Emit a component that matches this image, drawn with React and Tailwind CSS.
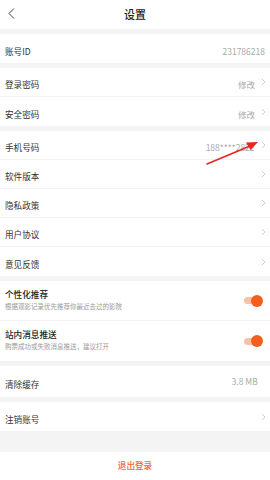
import React from "react";

const Chevron = () => (
  <svg width="5" height="8" viewBox="0 0 5 8" className="shrink-0">
    <path d="M1 1 L4 4 L1 7" fill="none" stroke="#c8c8c8" strokeWidth="0.9" />
  </svg>
);

const Label = ({ children, bold }) => (
  <span className={`inline-block text-[10px] leading-[12px] scale-[0.86] origin-left whitespace-nowrap ${bold ? "text-[#222] font-medium" : "text-[#333]"}`}>
    {children}
  </span>
);

const Value = ({ children }) => (
  <span className="inline-block text-[10px] leading-[12px] scale-[0.85] origin-right whitespace-nowrap text-[#aaa]">
    {children}
  </span>
);

const Row = ({ label, value, chevron = true, divider = true, pr = "pr-[4px]" }) => (
  <div className={`h-[29px] flex items-center pl-[5px] ${pr} bg-white ${divider ? "border-b border-[#f3f3f3]" : ""}`}>
    <div className="flex-1">
      <Label>{label}</Label>
    </div>
    {value && <div className={chevron ? "mr-[6px]" : ""}><Value>{value}</Value></div>}
    {chevron && <Chevron />}
  </div>
);

const Toggle = () => (
  <div className="relative w-[19px] h-[12px] flex items-center">
    <div className="w-[17px] h-[7px] rounded-full bg-[#f8c2a6]" />
    <div className="absolute right-0 w-[12px] h-[12px] rounded-full bg-[#f35d1d]" />
  </div>
);

const ToggleRow = ({ title, sub, divider }) => (
  <div className={`h-[40px] flex items-center pl-[5px] pr-[7px] bg-white ${divider ? "border-b border-[#f3f3f3]" : ""}`}>
    <div className="flex-1 flex flex-col">
      <Label bold>{title}</Label>
      <span className="inline-block text-[10px] leading-[11px] scale-[0.65] origin-top-left whitespace-nowrap text-[#999] mt-[1px]">
        {sub}
      </span>
    </div>
    <Toggle />
  </div>
);

const Gap = ({ h = "h-[5px]" }) => <div className={`${h} bg-[#f4f4f4]`} />;

export default function App() {
  return (
    <div
      className="relative w-[270px] h-[480px] bg-white overflow-hidden"
      style={{ fontFamily: '"Noto Sans CJK SC", "Noto Sans", sans-serif' }}
    >
      <div className="h-[29px] flex items-center justify-center relative bg-white">
        <svg width="7" height="11" viewBox="0 0 7 11" className="absolute left-[8px] top-[8px]">
          <path d="M6 0.5 L1 5.5 L6 10.5" fill="none" stroke="#444" strokeWidth="1" />
        </svg>
        <span className="text-[11px] text-[#222] font-medium">设置</span>
      </div>
      <Gap />
      <Row label="账号ID" value="231786218" chevron={false} divider={false} pr="pr-[5px]" />
      <Gap />
      <Row label="登录密码" value="修改" />
      <Row label="安全密码" value="修改" divider={false} />
      <Gap />
      <Row label="手机号码" value="188****2822" />
      <Row label="软件版本" />
      <Row label="隐私政策" />
      <Row label="用户协议" />
      <Row label="意见反馈" divider={false} />
      <Gap />
      <ToggleRow title="个性化推荐" sub="根据观影记录优先推荐你最近去过的影院" divider />
      <ToggleRow title="站内消息推送" sub="购票成功或失败消息推送，建议打开" />
      <Gap />
      <div className="h-[31px] flex items-center pl-[5px] pr-[12px] bg-white">
        <div className="flex-1">
          <Label>清除缓存</Label>
        </div>
        <Value>3.8 MB</Value>
      </div>
      <Gap />
      <Row label="注销账号" divider={false} />
      <Gap h="h-[21px]" />
      <div className="h-[27px] flex items-center justify-center bg-white">
        <span className="inline-block text-[10px] scale-[0.86] text-[#f26a2c] font-medium">退出登录</span>
      </div>

      <svg className="absolute left-0 top-0 pointer-events-none" width="270" height="480">
        <path d="M207 164 L250 146" stroke="#e8261c" strokeWidth="1.6" strokeLinecap="round" />
        <path d="M258 142 L246 142.5 L250.5 150 Z" fill="#e8261c" />
      </svg>
    </div>
  );
}
